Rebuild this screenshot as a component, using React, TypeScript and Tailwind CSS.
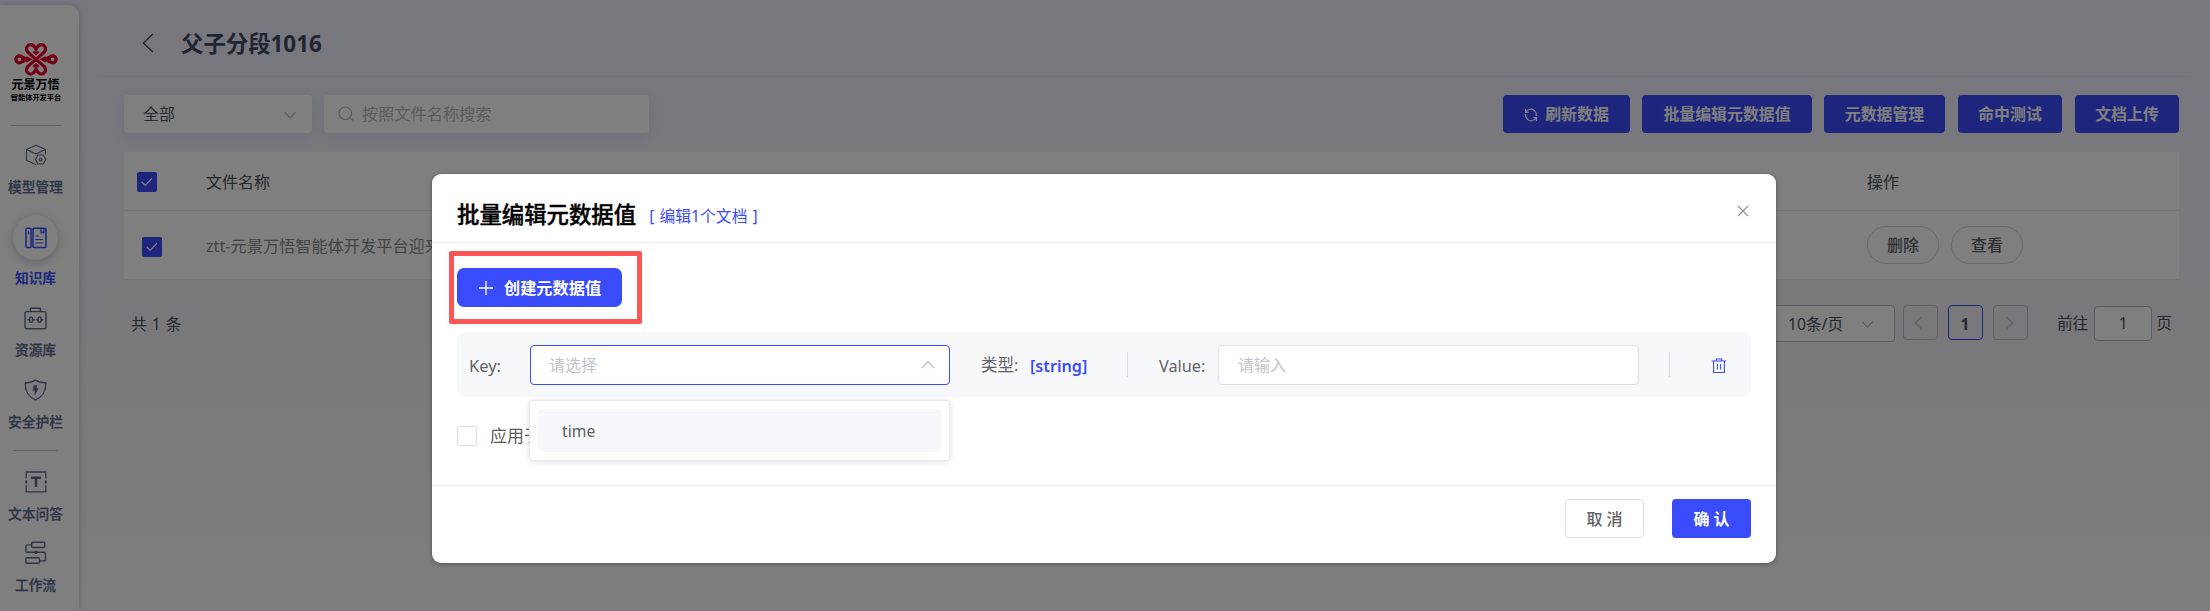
import type { ReactNode } from "react";
import clsx from "clsx";

function Logo() {
  return (
    <svg width="44" height="33" viewBox="0 0 132 99" fill="none" stroke="#e60027" strokeWidth="9.5">
      <circle cx="16" cy="49" r="10.5" />
      <circle cx="116" cy="49" r="10.5" />
      <path d="M66 49 L41 27 C32 14 42 5 50 5 C60 5 62 12 66 19 C70 12 72 5 82 5 C90 5 100 14 91 27 L66 49" />
      <path d="M66 49 L41 71 C32 84 42 93 50 93 C60 93 62 86 66 79 C70 86 72 93 82 93 C90 93 100 84 91 71 L66 49" />
      <path d="M25 41 L36 49 L25 57 M107 41 L96 49 L107 57" />
      <path d="M36 43 L48 49 L36 55 M96 43 L84 49 L96 55" strokeWidth="7" />
      <path d="M58 26 L66 33 L74 26 M58 72 L66 65 L74 72" strokeWidth="7" />
    </svg>
  );
}

const stroke = {
  fill: "none",
  stroke: "currentColor",
  strokeWidth: 1.4,
  strokeLinejoin: "round" as const,
  strokeLinecap: "round" as const,
};

function CubeIcon() {
  return (
    <svg width="22" height="22" viewBox="0 0 22 22" {...stroke} strokeWidth={1.15}>
      <path d="M10.5 20.5 L1.5 16.2 V5.6 L11 1.2 L20.5 5.6 V10" />
      <path d="M1.5 5.6 L11 10 L20.5 5.6" />
      <path d="M13 11 H18.2 L20.9 15.5 L18.2 20 H13 L10.4 15.5 Z" />
      <circle cx="15.6" cy="15.5" r="1.3" />
    </svg>
  );
}

function BookIcon() {
  return (
    <svg width="22" height="22" viewBox="0 0 22 22" {...stroke} strokeWidth={1.5}>
      <rect x="1" y="1.2" width="5" height="19.3" rx="1" />
      <rect x="8" y="1.2" width="13" height="19.3" rx="1" />
      <path d="M3.5 4.5 V7 M16 1.5 V6 L17.5 5 L19 6 V1.5 M11 9 H13.5 M11 12.5 H17.5 M11 16 H17.5" strokeWidth={1.2} />
    </svg>
  );
}

function CaseIcon() {
  return (
    <svg width="23" height="23" viewBox="0 0 23 23" {...stroke}>
      <rect x="1" y="4.6" width="21" height="17.2" rx="2" />
      <path d="M6.5 4.5 V1.2 H16.5 V4.5" />
      <rect x="5.6" y="10.3" width="3" height="5" rx="1" />
      <rect x="14" y="10.3" width="3" height="5" rx="1" />
      <path d="M4 12.8 H5.5 M9 12.8 H10.3 M12.5 12.8 H14 M17.3 12.8 H18.8" />
    </svg>
  );
}

function ShieldIcon() {
  return (
    <svg width="23" height="22" viewBox="0 0 23 22" {...stroke}>
      <path d="M1.2 3.6 C5 4 9 2.8 11.5 1.2 C14 2.8 18 4 21.8 3.6 C21.8 12 19.5 17.5 11.5 20.8 C3.5 17.5 1.2 12 1.2 3.6 Z" />
      <path d="M9.8 6.6 H13 L12.3 9.8 H14.2 L10.7 15.8 L11 11.4 H9.2 Z" fill="currentColor" strokeWidth={0.5} />
    </svg>
  );
}

function TextIcon() {
  return (
    <svg width="22" height="22" viewBox="0 0 22 22" {...stroke} strokeWidth={1.3}>
      <path d="M1.2 7.6 V1 H20.8 V7.6 M1.2 14 V20.9 H20.8 V14" strokeLinecap="butt" />
      <path d="M1.2 10.2 V11.7 M20.8 10.2 V11.7" strokeWidth={1.9} />
      <path d="M6 6.8 H16 M11 7 V16" strokeWidth={2.6} strokeLinecap="butt" />
    </svg>
  );
}

function FlowIcon() {
  return (
    <svg width="23" height="24" viewBox="0 0 23 24" {...stroke}>
      <rect x="7.6" y="1.3" width="13.2" height="5.2" rx="1" />
      <path d="M7.4 3.9 H3.8 Q1.9 3.9 1.9 5.8 V9.4 Q1.9 11.3 3.8 11.3 H19.6 Q21.5 11.3 21.5 13.2 V18 Q21.5 19.9 19.6 19.9 H15.6" />
      <rect x="1.9" y="16.8" width="13.6" height="5.4" rx="1" />
      <circle cx="12" cy="11.3" r="1.1" fill="currentColor" />
    </svg>
  );
}

function Chevron({ dir, className, size = 14 }: { dir: "up" | "down" | "left" | "right"; className?: string; size?: number }) {
  const d = {
    up: "M1.5 9.8 L7 4 L12.5 9.8",
    down: "M1.5 4.2 L7 10 L12.5 4.2",
    left: "M9.8 1.5 L4.4 7 L9.8 12.5",
    right: "M4.2 1.5 L9.6 7 L4.2 12.5",
  }[dir];
  return (
    <svg width={size} height={size} viewBox="0 0 14 14" fill="none" stroke="currentColor" strokeWidth="1.2" className={className}>
      <path d={d} />
    </svg>
  );
}

function NavItem({ icon, label, className }: { icon: ReactNode; label: string; className?: string }) {
  return (
    <div className={clsx("flex w-[71px] flex-col items-center text-[#5d6b8c]", className)}>
      <div className="flex h-6 items-center">{icon}</div>
      <div className="mt-[10px] h-5 text-[13.7px] leading-5 font-medium whitespace-nowrap [-webkit-text-stroke:0.25px]">{label}</div>
    </div>
  );
}

function Sidebar() {
  return (
    <aside className="mt-[5px] flex w-[79px] shrink-0 flex-col rounded-tr-[10px] bg-white shadow-[1px_0_5px_rgba(80,80,110,0.25)]">
      <div className="mt-[38px] flex w-[71px] flex-col items-center">
        <Logo />
        <div className="mt-[2px] h-[13px] text-[12px] leading-[14px] font-bold whitespace-nowrap text-black">元景万悟</div>
        <div className="flex h-3 w-[60px] items-center justify-center">
          <span className="scale-[0.9] text-[8px] leading-3 font-bold whitespace-nowrap text-black">智能体开发平台</span>
        </div>
        <div className="mt-[22px] h-px w-[50px] bg-[#c4c6cc]" />
      </div>
      <NavItem icon={<CubeIcon />} label="模型管理" className="mt-[17px]" />
      <div className="mt-[18px] flex w-[71px] flex-col items-center text-[#3a4cf9]">
        <div className="flex size-[45px] items-center justify-center rounded-full bg-white shadow-[0_2px_10px_rgba(60,60,90,0.3)]">
          <BookIcon />
        </div>
        <div className="mt-2 h-5 text-[13.7px] leading-5 font-bold">知识库</div>
      </div>
      <NavItem icon={<CaseIcon />} label="资源库" className="mt-[18px]" />
      <NavItem icon={<ShieldIcon />} label="安全护栏" className="mt-[18px]" />
      <div className="mt-[18px] ml-[13px] h-px w-[45px] bg-[#c4c6cc]" />
      <NavItem icon={<TextIcon />} label="文本问答" className="mt-[19px]" />
      <NavItem icon={<FlowIcon />} label="工作流" className="mt-[17px]" />
    </aside>
  );
}

function PrimaryButton({ children, className }: { children: ReactNode; className?: string }) {
  return (
    <button className={clsx("flex h-[38px] items-center justify-center rounded-[4px] bg-[#3a4cf9] pt-[2px] text-[15.9px] font-bold whitespace-nowrap text-white", className)}>
      {children}
    </button>
  );
}

function Checked() {
  return (
    <span className="flex size-5 items-center justify-center rounded-[2px] bg-[#3a4cf9]">
      <svg width="12" height="10" viewBox="0 0 12 10" fill="none" stroke="#fff" strokeWidth="1.2">
        <path d="M0.8 5 L4.2 8.4 L11 1.2" />
      </svg>
    </span>
  );
}

function RefreshIcon() {
  return (
    <svg width="14" height="14" viewBox="0 0 14 14" fill="none" stroke="currentColor" strokeWidth="1.2">
      <path d="M1.8 4.2 C4.2 0.6 8 0.6 10.2 2.4 C12 3.9 12.6 5.6 12.4 8" />
      <path d="M12.2 9.8 C9.8 13.4 6 13.4 3.8 11.6 C2 10.1 1.4 8.4 1.6 6" />
      <path d="M1.6 1 V4.4 H4.8 M12.4 13 V9.6 H9.2" />
    </svg>
  );
}

function Toolbar() {
  return (
    <div className="mt-[18px] ml-[45px] flex h-[38px] w-[2055px]">
      <div className="flex w-[188px] items-center justify-between rounded-[4px] bg-white pt-[2px] pr-[15px] pl-[19px] text-[15.9px] text-[#4e5268] shadow-[0_2px_14px_rgba(90,90,160,0.12)]">
        <span>全部</span>
        <Chevron dir="down" className="-mt-px text-[#b5b8c2]" />
      </div>
      <div className="ml-3 flex w-[325px] items-center rounded-[4px] bg-white pt-px pl-[14px] text-[16.2px] text-[#b4b7be] shadow-[0_2px_14px_rgba(90,90,160,0.12)]">
        <svg width="16" height="16" viewBox="0 0 16 16" fill="none" stroke="currentColor" strokeWidth="1.1" className="-mt-px">
          <circle cx="7.3" cy="7.3" r="6.3" />
          <path d="M12 11.8 L14.8 14.4" />
        </svg>
        <span className="ml-2">按照文件名称搜索</span>
      </div>
      <div className="ml-auto flex">
        <PrimaryButton className="w-[127px] gap-[7px]">
          <RefreshIcon />
          刷新数据
        </PrimaryButton>
        <PrimaryButton className="ml-3 w-[170px]">批量编辑元数据值</PrimaryButton>
        <PrimaryButton className="ml-3 w-[121px]">元数据管理</PrimaryButton>
        <PrimaryButton className="ml-[13px] w-[104px]">命中测试</PrimaryButton>
        <PrimaryButton className="ml-[13px] w-[104px]">文档上传</PrimaryButton>
      </div>
    </div>
  );
}

function FileTable() {
  return (
    <div className="mt-[19px] ml-[45px] w-[2055px] bg-white text-[16px]">
      <div className="flex h-[59px] items-center border-b border-[#e6e8ee] text-[#4c5262]">
        <div className="w-[82px] pt-px pl-[13px]">
          <Checked />
        </div>
        <div className="w-[1661px] pt-[2px]">文件名称</div>
        <div className="pt-[2px]">操作</div>
      </div>
      <div className="flex h-[69px] items-center border-b border-[#e6e8ee] text-[#86888e]">
        <div className="w-[82px] pt-[3px] pl-[18px]">
          <Checked />
        </div>
        <div className="w-[1661px] pt-[2px] text-[16.2px]">ztt-元景万悟智能体开发平台迎来</div>
        <div className="flex gap-3 text-[15.9px] font-medium text-[#5b5e66]">
          <span className="flex h-[38px] w-[72px] items-center justify-center rounded-full border border-[#d4d6dc] pt-px">删除</span>
          <span className="flex h-[38px] w-[72px] items-center justify-center rounded-full border border-[#d4d6dc] pt-px">查看</span>
        </div>
      </div>
    </div>
  );
}

function Pagination() {
  return (
    <div className="mt-[25px] ml-[45px] flex w-[2055px] items-start text-[15.7px] text-[#4a4e5c]">
      <div className="mt-[7px] ml-[7px] leading-6 [word-spacing:1px]">共 1 条</div>
      <div className="ml-auto flex h-[37px] w-[124px] items-center justify-between rounded-[4px] border border-[#b9bbc4] bg-white pt-[2px] pr-[20px] pl-[16px]">
        <span>10条/页</span>
        <Chevron dir="down" size={13} className="text-[#a9acb6]" />
      </div>
      <div className="ml-2 flex h-[35px] w-[35px] items-center justify-center rounded-[4px] border border-[#c3c5cc] pr-[4px]">
        <Chevron dir="left" className="text-[#c0c2ca]" />
      </div>
      <div className="ml-[10px] flex h-[35px] w-[35px] items-center justify-center rounded-[4px] border border-[#3a4cf9] pt-[4px] pr-px font-bold">1</div>
      <div className="ml-[10px] flex h-[35px] w-[35px] items-center justify-center rounded-[4px] border border-[#c3c5cc]">
        <Chevron dir="right" className="text-[#c0c2ca]" />
      </div>
      <div className="mt-[6px] ml-[29px] leading-6">前往</div>
      <div className="mt-px ml-[6px] flex h-[35px] w-[58px] items-center justify-center rounded-[4px] border border-[#b9bbc4] bg-white">1</div>
      <div className="mt-[6px] mr-[7px] ml-[4px] leading-6">页</div>
    </div>
  );
}

function Field({ text, active, className, children }: { text: string; active?: boolean; className?: string; children?: ReactNode }) {
  return (
    <div
      className={clsx(
        "relative flex h-10 items-center justify-between rounded-[4px] border bg-white pr-[13px] text-[16px] text-[#bfc3cc]",
        active ? "border-[#3a4cf9] pl-[18px]" : "border-[#dcdfe6] pl-[19px]",
        className,
      )}
    >
      <span>{text}</span>
      {children}
    </div>
  );
}

function KeyRow() {
  return (
    <div className="relative z-10 mt-[25px] flex h-[65px] items-center rounded-[9px] bg-[#f7f8fa] text-[16.5px] text-[#606266]">
      <span className="w-[73px] pt-[3px] pl-[12px]">Key:</span>
      <Field text="请选择" active className="w-[420px]">
        <Chevron dir="up" size={16} className="text-[#bfc3cc]" />
        <div className="absolute top-[54px] -left-[2px] w-[421px] rounded-[4px] border border-[#e4e7ed] bg-white p-2 shadow-[0_1px_6px_rgba(0,0,0,0.13)]">
          <div className="flex h-[43px] items-center rounded-[4px] bg-[#f5f7fa] pt-[3px] pl-6 text-[15.7px] text-[#606266]">time</div>
        </div>
      </Field>
      <span className="ml-[31px] w-[49px] pt-[2px]">类型:</span>
      <span className="w-[97px] pt-[3px] text-[16.2px] font-semibold text-[#3a4cf9]">[string]</span>
      <span className="h-[25px] w-px bg-[#d9dce3]" />
      <span className="ml-[31px] w-[59px] pt-[3px] text-[16.3px]">Value:</span>
      <Field text="请输入" className="w-[421px]" />
      <span className="ml-[30px] h-[25px] w-px bg-[#d9dce3]" />
      <svg width="16" height="16" viewBox="0 0 16 16" fill="none" stroke="#3a4cf9" strokeWidth="1.1" className="mt-[3px] ml-[41px]">
        <path d="M0.8 3 H15.2 M5.3 3 V1 H10.7 V3 M2.6 3 V14.5 H13.4 V3" />
        <path d="M6.4 6 V11.5 M9.6 6 V11.5" />
      </svg>
    </div>
  );
}

function Modal() {
  return (
    <div className="mt-[174px] ml-[432px] flex h-[389px] w-[1344px] flex-col rounded-[9px] bg-white shadow-[0_1px_4px_rgba(0,0,0,0.35)]">
      <div className="flex h-[69px] items-start border-b border-[#eceef1] pl-[25px]">
        <h2 className="mt-[25px] text-[22.4px] leading-8 font-medium text-black [-webkit-text-stroke:0.4px]">批量编辑元数据值</h2>
        <span className="mt-[28px] ml-[13px] text-[15.8px] leading-7 text-[#3a4cf9] [word-spacing:1px]">[ 编辑1个文档 ]</span>
        <svg width="12" height="12" viewBox="0 0 12 12" stroke="#8c9098" strokeWidth="1.2" className="mt-[31px] mr-[27px] ml-auto">
          <path d="M1 1 L11 11 M11 1 L1 11" />
        </svg>
      </div>
      <div className="flex h-[243px] flex-col border-b border-[#eceef1] px-[25px] pt-[25px]">
        <div className="relative w-[165px]">
          <button className="flex h-[39px] w-[165px] items-center rounded-[7px] bg-[#3a4cf9] pt-px pl-[22px] text-[16.2px] font-bold whitespace-nowrap text-white">
            <svg width="14" height="14" viewBox="0 0 14 14" stroke="#fff" strokeWidth="1.3" className="mr-[11px]">
              <path d="M0 7 H14 M7 0 V14" />
            </svg>
            创建元数据值
          </button>
          <div className="absolute -top-[17px] -left-[8px] h-[73px] w-[193px] rounded-[2px] border-5 border-[#fd5456]" />
        </div>
        <KeyRow />
        <div className="mt-[29px] flex h-5 items-center text-[17px] text-[#5a5c60]">
          <span className="size-5 rounded-[2px] border border-[#dcdfe6] bg-white" />
          <span className="ml-[13px] leading-5 whitespace-nowrap">应用于</span>
        </div>
      </div>
      <div className="mt-[13px] flex justify-end gap-7 pr-[25px] text-[16px]">
        <button className="h-[39px] w-[79px] rounded-[4px] border border-[#dcdfe6] font-medium text-[#606266]">取 消</button>
        <button className="h-[39px] w-[79px] rounded-[4px] bg-[#3a4cf9] font-bold text-white">确 认</button>
      </div>
    </div>
  );
}

export default function App() {
  return (
    <div className="relative flex h-[611px] w-[2210px] overflow-hidden bg-linear-to-b from-[#eeeefd] via-[#f2f2f8] via-50% to-[#fcfcfc] font-['Noto_Sans','Noto_Sans_CJK_SC',sans-serif]">
      <Sidebar />
      <main className="flex flex-col">
        <header className="flex h-[77px] w-[2112px] items-start">
          <div className="ml-5 flex h-[77px] flex-1 items-start border-b border-[#e9e9ee] pl-[43px]">
            <svg width="12" height="20" viewBox="0 0 12 20" fill="none" stroke="#3c4354" strokeWidth="1.3" className="mt-[33px]">
              <path d="M10.8 1 L1.5 10 L10.8 19" />
            </svg>
            <h1 className="mt-[28px] ml-[27px] text-[22.4px] leading-8 font-bold text-[#434a62]">父子分段1016</h1>
          </div>
        </header>
        <Toolbar />
        <FileTable />
        <Pagination />
      </main>
      <div className="absolute inset-0 z-20 bg-black/50">
        <Modal />
      </div>
    </div>
  );
}
